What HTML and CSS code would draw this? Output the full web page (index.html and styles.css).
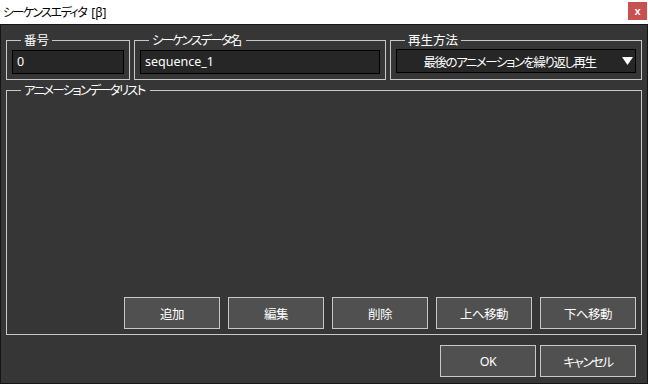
FILE: index.html
```html
<!DOCTYPE html>
<html lang="ja">
<head>
    <meta charset="UTF-8">
    <meta name="viewport" content="width=device-width, initial-scale=1.0">
    <title>シーケンスエディタ [β]</title>
    <link rel="stylesheet" href="styles.css">
</head>
<body>
    <div class="window">
        <div class="titlebar">
            <span class="titlebar-text"><span class="kana">シーケンスエディタ</span> <span class="titlebar-beta">[β]</span></span>
            <button class="close-button">x</button>
        </div>
        <div class="panel">
            <div class="top-row">
                <fieldset class="group group-number">
                    <legend class="group-label">番号</legend>
                    <input class="text-input" type="text" value="0">
                </fieldset>
                <fieldset class="group group-name">
                    <legend class="group-label kana">シーケンスデータ名</legend>
                    <input class="text-input" type="text" value="sequence_1">
                </fieldset>
                <fieldset class="group group-play">
                    <legend class="group-label">再生方法</legend>
                    <div class="combo">
                        <span class="combo-text kana">最後のアニメーションを繰り返し再生</span>
                        <svg class="combo-arrow" width="11" height="8" viewBox="0 0 11 8">
                            <polygon points="0,0 11,0 5.5,8" fill="#fff"/>
                        </svg>
                    </div>
                </fieldset>
            </div>
            <fieldset class="group group-list">
                <legend class="group-label kana">アニメーションデータリスト</legend>
                <div class="list-body">
                    <button class="button">追加</button>
                    <button class="button">編集</button>
                    <button class="button">削除</button>
                    <button class="button">上へ移動</button>
                    <button class="button">下へ移動</button>
                </div>
            </fieldset>
            <div class="footer">
                <button class="button">OK</button>
                <button class="button kana">キャンセル</button>
            </div>
        </div>
    </div>
</body>
</html>
```

FILE: styles.css
```css
body {
    margin: 0;
    background-color: #fff;
    font-family: "Noto Sans", "Noto Sans CJK JP", sans-serif;
    font-feature-settings: "palt";
}
.window {
    width: 648px;
    height: 384px;
    display: flex;
    flex-flow: column nowrap;
}

/* Meiryo UI kana are much narrower than Noto's */
.kana {
    letter-spacing: -1.5px;
}

.titlebar {
    height: 24px;
    display: flex;
    flex-flow: row nowrap;
    align-items: center;
    justify-content: space-between;
    background-color: #fff;
}
.titlebar-text {
    padding-left: 3px;
    font-size: 12px;
    color: #000;
}
.titlebar-beta {
    margin-left: 2px;
}
.close-button {
    width: 19px;
    height: 18px;
    margin: 0 1px 2px 0;
    padding: 0;
    background-color: #c75050;
    border: none;
    color: #fff;
    font-family: "Liberation Sans", sans-serif;
    font-size: 11px;
    font-weight: bold;
    line-height: 16px;
}

.panel {
    flex: 1;
    padding: 8px 5px 6px 5px;
    display: flex;
    flex-flow: column nowrap;
    background-color: #363636;
    border: 1px solid #151515;
}
.top-row {
    display: flex;
    flex-flow: row nowrap;
    gap: 4px;
}

.group {
    margin: 0;
    padding: 1px 5px 5px 5px;
    border: 1px solid #c8c8c8;
    min-width: 0;
}
.group-label {
    margin-left: 9px;
    padding: 0 3px;
    height: 15px;
    line-height: 15px;
    font-size: 12.5px;
    color: #fff;
}
.group-label.kana {
    padding-right: 5px;
    letter-spacing: -1.8px;
}
.group-number {
    width: 124px;
    box-sizing: border-box;
}
.group-name,
.group-play {
    width: 252px;
    box-sizing: border-box;
}

.text-input {
    width: 100%;
    height: 24px;
    box-sizing: border-box;
    margin: 0;
    padding: 0 4px;
    background-color: #262626;
    border: 1px solid #000;
    outline: none;
    color: #fff;
    font-family: inherit;
    font-size: 12.5px;
}

.combo {
    height: 24px;
    box-sizing: border-box;
    display: flex;
    flex-flow: row nowrap;
    align-items: center;
    background-color: #262626;
    border: 1px solid #000;
}
.combo-text {
    flex: 1;
    text-align: center;
    font-size: 12.5px;
    color: #fff;
}
.combo-arrow {
    margin-right: 2px;
}

.group-list {
    margin-top: 3px;
    flex: 1;
    display: flex;
    flex-flow: column nowrap;
}
.list-body {
    flex: 1;
    display: flex;
    flex-flow: row nowrap;
    align-items: flex-end;
    justify-content: flex-end;
    gap: 8px;
}

.button {
    width: 96px;
    height: 32px;
    padding: 0;
    background-color: #505050;
    border: 1px solid #c8c8c8;
    color: #fff;
    font-family: inherit;
    font-feature-settings: "palt";
    font-size: 12.5px;
    letter-spacing: -0.5px;
}
.button.kana {
    letter-spacing: -1.5px;
}

.footer {
    margin-top: 10px;
    padding-right: 6px;
    display: flex;
    flex-flow: row nowrap;
    justify-content: flex-end;
    gap: 4px;
}
```
